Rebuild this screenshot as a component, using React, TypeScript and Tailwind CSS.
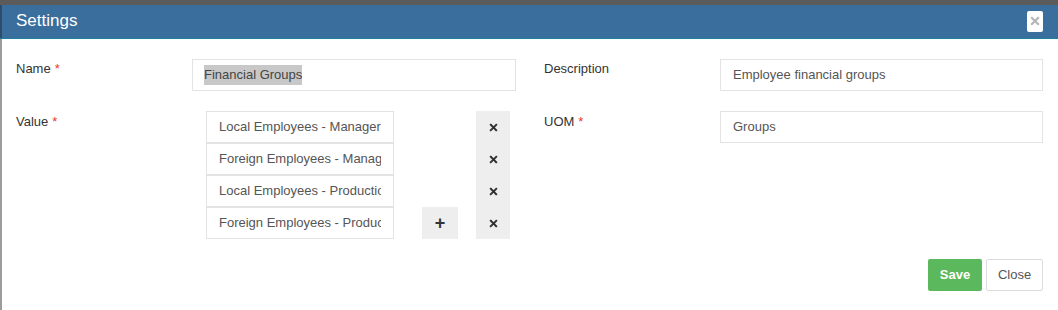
import React from "react";

const VALUES = [
  "Local Employees - Managers",
  "Foreign Employees - Managers",
  "Local Employees - Production",
  "Foreign Employees - Production",
];

function Req() {
  return <span className="ml-1 text-[#e53935]">*</span>;
}

function XIcon({ className = "" }: { className?: string }) {
  return (
    <svg viewBox="0 0 10 10" className={className} fill="none" stroke="currentColor" strokeWidth="2.2" strokeLinecap="square">
      <path d="M2 2 L8 8 M8 2 L2 8" />
    </svg>
  );
}

export default function App() {
  return (
    <div className="flex h-[310px] w-[1058px] flex-col bg-[#5b5b5b] pt-[5px] font-['Liberation_Sans',Arial,sans-serif]">
      <div className="flex flex-1 flex-col">
        {/* header */}
        <div className="flex h-[34px] border-b border-[#1d7f9c] bg-[#3a6e9c]">
          <div className="w-[2px] bg-[#2b4d6b]" />
          <div className="flex flex-1 items-center justify-between pb-[1px] pl-[14px] pr-[15px]">
            <span className="text-[17px] text-white">Settings</span>
            <button className="flex h-[21px] w-[16px] items-center justify-center rounded-[2px] bg-white text-[#b5b5b5]">
              <XIcon className="h-[10px] w-[10px]" />
            </button>
          </div>
        </div>

        {/* body */}
        <div className="flex flex-1">
          <div className="w-[2px] bg-[#9c9c9c]" />
          <div className="flex flex-1 flex-col bg-white pl-[14px] pr-[15px] pt-[20px] text-[13px] text-[#555]">
            <div className="flex">
              <div className="flex w-[176px] text-[13px] text-[#333]">
                Name
                <Req />
              </div>
              <div className="flex h-[32px] w-[324px] items-center border border-[#e3e3e3] px-[11px]">
                <span className="bg-[#c8c8c8] text-[#444]">Financial Groups</span>
              </div>
              <div className="ml-[28px] w-[176px] text-[#333]">Description</div>
              <div className="flex h-[32px] w-[323px] items-center border border-[#e3e3e3] px-[12px]">
                Employee financial groups
              </div>
            </div>

            <div className="mt-[20px] flex">
              <div className="flex w-[176px] pt-[1px] text-[#333]">
                Value
                <Req />
              </div>
              <div className="flex w-[324px] pl-[14px]">
                <div className="flex w-[188px] flex-col">
                  {VALUES.map((v) => (
                    <div
                      key={v}
                      className="flex h-[32px] items-center overflow-hidden whitespace-nowrap border border-[#e3e3e3] pl-[12px] pr-[12px]"
                    >
                      <span className="block overflow-hidden">{v}</span>
                    </div>
                  ))}
                </div>
                <div className="ml-[28px] flex w-[36px] flex-col justify-end">
                  <button className="flex h-[32px] items-center justify-center bg-[#eeeeee] text-[18px] font-bold text-[#333]">
                    +
                  </button>
                </div>
                <div className="ml-[18px] flex w-[34px] flex-col bg-[#eeeeee]">
                  {VALUES.map((v) => (
                    <div key={v} className="flex h-[32px] items-center justify-center text-[#333]">
                      <XIcon className="h-[9px] w-[9px]" />
                    </div>
                  ))}
                </div>
              </div>
              <div className="ml-[28px] flex w-[176px] pt-[1px] text-[#333]">
                UOM
                <Req />
              </div>
              <div className="flex h-[32px] w-[323px] items-center border border-[#e3e3e3] px-[12px]">
                Groups
              </div>
            </div>

            <div className="mt-[20px] flex justify-end gap-[4px]">
              <button className="h-[32px] w-[54px] rounded-[2px] bg-[#5cb85c] text-[13px] font-bold text-white">
                Save
              </button>
              <button className="h-[32px] w-[57px] rounded-[2px] border border-[#dcdcdc] bg-white text-[13px] text-[#555]">
                Close
              </button>
            </div>
          </div>
        </div>
      </div>
    </div>
  );
}
